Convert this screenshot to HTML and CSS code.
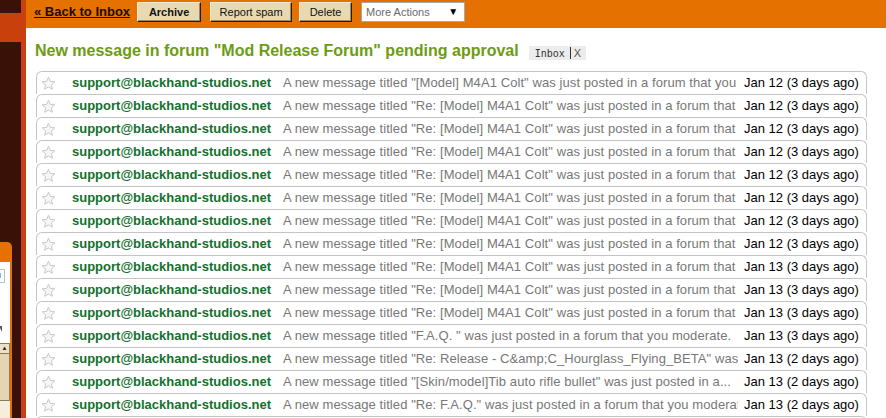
FILE: index.html
```html
<!DOCTYPE html>
<html>
<head>
<meta charset="utf-8">
<link rel="stylesheet" href="styles.css">
</head>
<body>
<div class="page">
  <aside class="side">
    <div class="side-gap"></div>
    <div class="side-band"></div>
    <div class="side-fill"></div>
    <div class="side-panel">
      <div class="sp-head"></div>
      <div class="sp-body">
        <div class="sp-input"><span class="sp-caret"></span></div>
        <div class="sp-tri"></div>
        <div class="sp-scroll"><div class="sp-up">▲</div></div>
        <div class="sp-foot"></div>
      </div>
    </div>
  </aside>
  <div class="stripe"></div>
  <main class="main">
    <div class="toolbar">
      <a class="back">« Back to Inbox</a>
      <span class="btn btn-archive">Archive</span>
      <span class="btn btn-spam">Report spam</span>
      <span class="btn btn-delete">Delete</span>
      <span class="select"><span>More Actions</span><span class="arrow">▼</span></span>
    </div>
    <div class="subject">
      <h1 class="subj-text">New message in forum "Mod Release Forum" pending approval</h1>
      <span class="label"><span class="label-name">Inbox</span><span class="label-sep"></span><span class="label-x">X</span></span>
    </div>
    <div class="rows" id="rows"></div>
  </main>
</div>
<script src="app.js"></script>
</body>
</html>
```

FILE: app.js
```js
var data = [
  ['"[Model] M4A1 Colt" was just posted in a forum that you moderate.', 'Jan 12 (3 days ago)'],
  ['"Re: [Model] M4A1 Colt" was just posted in a forum that you moderate.', 'Jan 12 (3 days ago)'],
  ['"Re: [Model] M4A1 Colt" was just posted in a forum that you moderate.', 'Jan 12 (3 days ago)'],
  ['"Re: [Model] M4A1 Colt" was just posted in a forum that you moderate.', 'Jan 12 (3 days ago)'],
  ['"Re: [Model] M4A1 Colt" was just posted in a forum that you moderate.', 'Jan 12 (3 days ago)'],
  ['"Re: [Model] M4A1 Colt" was just posted in a forum that you moderate.', 'Jan 12 (3 days ago)'],
  ['"Re: [Model] M4A1 Colt" was just posted in a forum that you moderate.', 'Jan 12 (3 days ago)'],
  ['"Re: [Model] M4A1 Colt" was just posted in a forum that you moderate.', 'Jan 12 (3 days ago)'],
  ['"Re: [Model] M4A1 Colt" was just posted in a forum that you moderate.', 'Jan 13 (3 days ago)'],
  ['"Re: [Model] M4A1 Colt" was just posted in a forum that you moderate.', 'Jan 13 (3 days ago)'],
  ['"Re: [Model] M4A1 Colt" was just posted in a forum that you moderate.', 'Jan 13 (3 days ago)'],
  ['"F.A.Q. " was just posted in a forum that you moderate.', 'Jan 13 (3 days ago)'],
  ['"Re: Release - C&amp;C_Hourglass_Flying_BETA" was just posted', 'Jan 13 (2 days ago)'],
  ['"[Skin/model]Tib auto rifle bullet" was just posted in a...', 'Jan 13 (2 days ago)'],
  ['"Re: F.A.Q." was just posted in a forum that you moderate.', 'Jan 13 (2 days ago)'],
  ['"Re: F.A.Q." was just posted in a forum that you moderate.', 'Jan 13 (2 days ago)']
];
var star = '<svg class="star" width="15" height="15" viewBox="0 0 15 15"><path d="M7.5 1.2 L9.3 5.4 L13.8 5.8 L10.4 8.8 L11.4 13.3 L7.5 10.9 L3.6 13.3 L4.6 8.8 L1.2 5.8 L5.7 5.4 Z" fill="#f6f6f6" stroke="#c9c9c9" stroke-width="1" stroke-linejoin="round"/></svg>';
var rows = document.getElementById('rows');
data.forEach(function (d) {
  var r = document.createElement('div');
  r.className = 'row';
  r.innerHTML = '<span class="cell-star">' + star + '</span>' +
    '<span class="sender">support@blackhand-studios.net</span>' +
    '<span class="snippet"></span>' +
    '<span class="date"></span>';
  r.querySelector('.snippet').textContent = 'A new message titled ' + d[0];
  r.querySelector('.date').textContent = d[1];
  rows.appendChild(r);
});
```

FILE: styles.css
```css
html, body {
  margin: 0;
  padding: 0;
  background: #ffffff;
}
body {
  font-family: "Liberation Sans", Arial, sans-serif;
  overflow: hidden;
}
.page {
  display: flex;
  height: 418px;
  width: 886px;
  overflow: hidden;
}
.side {
  width: 21px;
  flex: 0 0 21px;
  background: #3a1106;
  display: flex;
  flex-direction: column;
}
.side-gap { height: 13px; flex: 0 0 13px; }
.side-band { height: 29px; flex: 0 0 29px; background: #c8400c; }
.side-fill { height: 200px; flex: 0 0 200px; }
.side-panel {
  flex: 1;
  width: 12px;
  display: flex;
  flex-direction: column;
}
.sp-head {
  height: 20px;
  flex: 0 0 20px;
  background: #e57100;
  border-top-right-radius: 5px;
}
.sp-body {
  flex: 1;
  width: 10px;
  border-right: 2px solid #e57100;
  background: #ffffff;
  display: flex;
  flex-direction: column;
}
.sp-input {
  margin-top: 7px;
  height: 12px;
  flex: 0 0 12px;
  width: 4px;
  border: 1px solid #b8c0c8;
  border-left: none;
  position: relative;
}
.sp-caret {
  position: absolute;
  left: 0;
  top: 3px;
  width: 1px;
  height: 5px;
  background: #7fb8e0;
}
.sp-tri {
  margin-top: 43px;
  width: 0;
  height: 0;
  border-top: 6px solid #555;
  border-left: 3px solid transparent;
  margin-left: -1px;
}
.sp-scroll {
  margin-top: 11px;
  height: 56px;
  flex: 0 0 56px;
  background: #e4d6b2;
  border-top: 1px solid #8c7c5c;
  border-right: 1px solid #8c7c5c;
  border-bottom: 1px solid #8c7c5c;
}
.sp-up {
  height: 9px;
  width: 9px;
  font-size: 6px;
  line-height: 9px;
  text-align: center;
  background: #ede2c6;
  border-bottom: 1px solid #8c7c5c;
  color: #222;
}
.sp-foot {
  flex: 1;
  background: #f6eedc;
}
.stripe {
  width: 5px;
  flex: 0 0 5px;
  background: #c8400c;
}
.main {
  flex: 1;
  min-width: 0;
  display: flex;
  flex-direction: column;
}
.toolbar {
  height: 28px;
  flex: 0 0 28px;
  background: #e57100;
  display: flex;
  align-items: flex-start;
  padding: 2px 0 0 8px;
  box-sizing: border-box;
}
.back {
  font-size: 13px;
  font-weight: bold;
  color: #1c0c00;
  text-decoration: underline;
  line-height: 20px;
  margin-right: 7px;
}
.btn {
  height: 20px;
  box-sizing: border-box;
  background: #e8d9b1;
  border: 1px solid #f4ead2;
  border-right-color: #2a1a08;
  border-bottom-color: #2a1a08;
  box-shadow: inset -1px -1px 0 #9c8a64;
  font-size: 11px;
  line-height: 18px;
  color: #111;
  text-align: center;
  font-family: "Liberation Sans", Arial, sans-serif;
}
.btn-archive { width: 64px; font-weight: bold; margin-right: 9px; }
.btn-spam { width: 82px; margin-right: 7px; }
.btn-delete { width: 53px; margin-right: 9px; }
.select {
  width: 104px;
  height: 20px;
  box-sizing: border-box;
  background: #ffffff;
  border: 1px solid #a8a8a8;
  font-size: 11px;
  line-height: 18px;
  color: #6a6a6a;
  padding-left: 4px;
  display: flex;
  justify-content: space-between;
}
.select .arrow {
  color: #000;
  font-size: 10px;
  padding-right: 6px;
}
.subject {
  display: flex;
  align-items: center;
  margin: 13px 0 10px 9px;
  height: 20px;
  flex: 0 0 20px;
}
.subj-text {
  margin: 0;
  font-size: 16px;
  line-height: 20px;
  font-weight: bold;
  color: #6b9c12;
  white-space: nowrap;
}
.label {
  margin-left: 10px;
  margin-top: 4px;
  height: 14px;
  background: #ececec;
  display: flex;
  align-items: center;
  padding: 0 5px 0 6px;
  font-family: "DejaVu Sans Mono", monospace;
  font-size: 10px;
  color: #333;
}
.label-sep {
  width: 1px;
  height: 12px;
  background: #333;
  margin: 0 3px 0 5px;
}
.label-x {
  color: #555;
  font-family: "Liberation Sans", Arial, sans-serif;
  font-size: 11px;
}
.rows {
  margin-left: 10px;
  width: 831px;
  flex: 0 0 auto;
}
.row {
  height: 22px;
  border: 1px solid #c4c4c4;
  border-bottom: none;
  border-radius: 6px 6px 0 0;
  display: grid;
  grid-template-columns: 35px 211px 455px auto;
  align-items: center;
  font-size: 13px;
  line-height: 16px;
  background: #fff;
}
.cell-star {
  display: flex;
  padding-left: 4px;
}
.star { display: block; }
.sender {
  font-weight: bold;
  color: #12702c;
  white-space: nowrap;
}
.snippet {
  color: #777777;
  white-space: nowrap;
  overflow: hidden;
  letter-spacing: 0.08px;
}
.date {
  color: #000;
  white-space: nowrap;
  margin-left: 6px;
}
```
